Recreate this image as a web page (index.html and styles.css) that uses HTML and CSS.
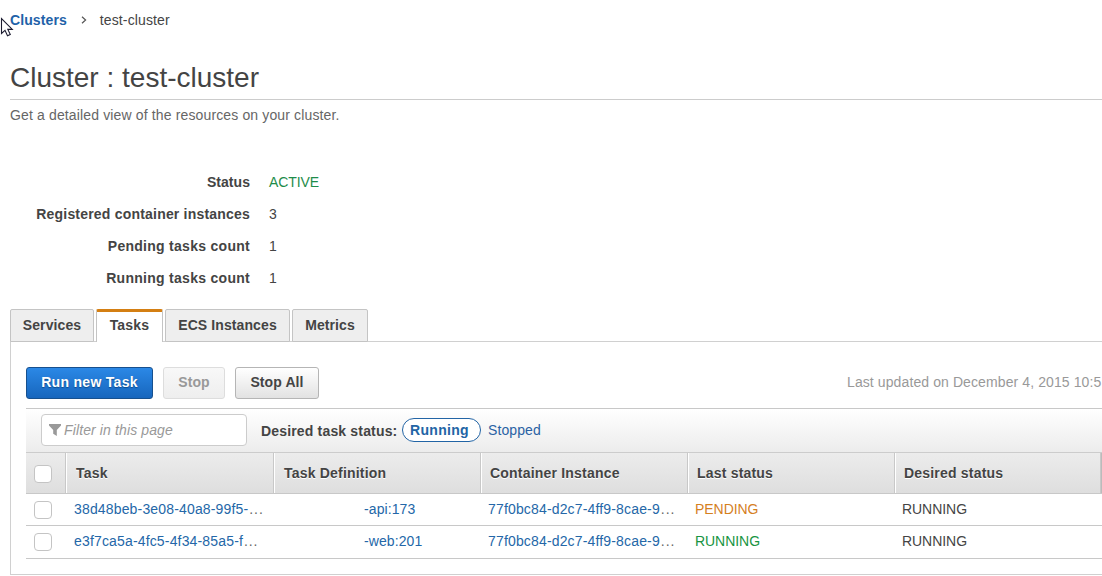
FILE: index.html
```html
<!DOCTYPE html>
<html lang="en">
<head>
<meta charset="utf-8">
<title>Cluster : test-cluster</title>
<link rel="stylesheet" href="styles.css">
</head>
<body>
<svg class="cursor" width="14" height="21" viewBox="0 0 14 21"><path d="M1.5 1.5V16.5L5 13.3L7.5 18.8L10.3 17.5L7.8 12.4H12.3Z" fill="#fff" stroke="#1c1c30" stroke-width="1.1"/></svg>
<main class="page">
  <nav class="crumbs"><a class="crumb-link" href="#">Clusters</a><svg class="chevron" width="6" height="8" viewBox="0 0 6 8"><path d="M1 .7L4.6 4L1 7.3" fill="none" stroke="#555" stroke-width="1.2"/></svg><span class="crumb-here">test-cluster</span></nav>
  <h1 class="title"><span class="title-text">Cluster : test-cluster</span></h1>
  <p class="description">Get a detailed view of the resources on your cluster.</p>
  <dl class="facts">
    <dt class="short">Status</dt><dd class="active">ACTIVE</dd>
    <dt>Registered container instances</dt><dd>3</dd>
    <dt class="wide">Pending tasks count</dt><dd>1</dd>
    <dt class="wide">Running tasks count</dt><dd>1</dd>
  </dl>
  <div class="tabs">
    <a class="tab services">Services</a><a class="tab selected">Tasks</a><a class="tab ecs">ECS Instances</a><a class="tab metrics">Metrics</a>
  </div>
  <section class="panel">
    <div class="actions">
      <button class="btn primary">Run new Task</button><button class="btn disabled">Stop</button><button class="btn all">Stop All</button>
      <span class="updated">Last updated on December 4, 2015 10:5</span>
    </div>
    <div class="filterbar">
      <div class="filter"><svg width="12" height="12" viewBox="0 0 12 12"><path d="M0 0H12V1.6L7.8 6V12L4.2 9.8V6L0 1.6Z" fill="#999"/></svg><span>Filter in this page</span></div>
      <span class="status-label">Desired task status:</span>
      <span class="pill">Running</span>
      <a class="stopped">Stopped</a>
    </div>
    <div class="row head">
      <div class="cell"><i class="check"></i></div><div class="cell">Task</div><div class="cell">Task Definition</div><div class="cell near">Container Instance</div><div class="cell near">Last status</div><div class="cell near">Desired status</div><div class="cell"></div>
    </div>
    <div class="row">
      <div class="cell"><i class="check"></i></div><div class="cell link">38d48beb-3e08-40a8-99f5-<span class="dots">...</span></div><div class="cell link definition">-api:173</div><div class="cell link instance">77f0bc84-d2c7-4ff9-8cae-9<span class="dots">...</span></div><div class="cell state pending">PENDING</div><div class="cell state">RUNNING</div>
    </div>
    <div class="row last">
      <div class="cell"><i class="check"></i></div><div class="cell link">e3f7ca5a-4fc5-4f34-85a5-f<span class="dots">...</span></div><div class="cell link definition">-web:201</div><div class="cell link instance">77f0bc84-d2c7-4ff9-8cae-9<span class="dots">...</span></div><div class="cell state running">RUNNING</div><div class="cell state">RUNNING</div>
    </div>
  </section>
</main>
</body>
</html>
```
FILE: styles.css
```css
* { box-sizing: border-box; }
body { margin: 0; background: #fff; color: #444; font: 14px/20px "Liberation Sans", Arial, sans-serif; }
.page { height: 576px; padding: 10px 0 0 10px; overflow: hidden; }
.cursor { position: absolute; left: 0; top: 17px; }
.crumbs { display: flex; align-items: center; height: 20px; }
.crumb-link { color: #1f62a8; font-weight: bold; letter-spacing: .1px; text-decoration: none; }
.crumb-here { letter-spacing: .12px; }
.chevron { margin: 0 13px 0 14px; }
.title { height: 70px; margin: 0; padding-top: 31px; border-bottom: 1px solid #ccc; font-size: 28px; font-weight: normal; line-height: 34px; }
.description { margin: 0; padding-top: 5px; color: #666; letter-spacing: .14px; }
.facts { display: grid; grid-template-columns: 240px 1fr; column-gap: 19px; grid-auto-rows: 32px; line-height: 32px; margin: 41px 0 15px; }
.facts dt { text-align: right; font-weight: bold; letter-spacing: .2px; }
.facts .short { letter-spacing: .05px; }
.facts .wide { letter-spacing: .28px; }
.facts dd { margin: 0; }
.facts .active { color: #1e8c4a; letter-spacing: -.1px; }
.tabs { position: relative; display: flex; gap: 2px; height: 33px; font-weight: bold; margin-bottom: -1px; }
.tab { height: 33px; border: 1px solid #c4c4c4; background: #eee; border-radius: 2px 2px 0 0; text-align: center; line-height: 31px; letter-spacing: .1px; }
.services { width: 84px; }
.selected { width: 67px; background: #fff; border-top: 3px solid #d47f13; border-bottom: 0; line-height: 27px; letter-spacing: .2px; }
.ecs { width: 125px; }
.metrics { width: 76px; }
.panel { height: 234px; border: 1px solid #d0d0d0; border-right: 0; padding: 25px 0 0 15px; }
.actions { display: flex; height: 41px; overflow: hidden; }
.btn { flex: none; height: 32px; margin: 0 10px 0 0; padding: 0 0 2px; border: 1px solid #b5b5b5; border-radius: 3px; background: linear-gradient(#fff, #e2e2e2); color: #444; font: bold 14px "Liberation Sans", Arial, sans-serif; letter-spacing: .1px; }
.primary { width: 127px; border-color: #17508e; background: linear-gradient(#2b88e6, #1766bd); color: #fff; text-shadow: 0 1px 1px #0d4a8d; letter-spacing: .3px; }
.disabled { width: 62px; border-color: #ddd; background: linear-gradient(#f8f8f8, #eee); color: #999; }
.all { width: 84px; }
.updated { margin: 5px 0 0 518px; color: #999; white-space: nowrap; letter-spacing: .1px; }
.filterbar { display: flex; height: 44px; padding: 5px 0 0 15px; border-top: 1px solid #c8c8c8; background: linear-gradient(#fff, #ececec); }
.filter { display: flex; gap: 3px; align-items: center; width: 206px; height: 32px; padding-left: 7px; margin-right: 14px; border: 1px solid #ccc; border-radius: 4px; background: #fff; color: #999; font-style: italic; letter-spacing: .12px; }
.status-label { width: 141px; font-weight: bold; line-height: 34px; white-space: nowrap; letter-spacing: .17px; }
.pill { width: 79px; height: 24px; margin: 4px 7px 0 0; border: 1px solid #2264a5; border-radius: 12px; background: #fff; color: #2264a5; font-weight: bold; text-align: center; line-height: 23px; letter-spacing: .3px; padding-right: 4px; }
.stopped { color: #2a62a4; line-height: 32px; letter-spacing: .1px; }
.row { display: grid; grid-template-columns: 40px 208px repeat(3, 207px) 206px 1px; height: 32px; border-bottom: 1px solid #c8c8c8; line-height: 31px; }
.last { height: 33px; }
.cell { padding-left: 8px; white-space: nowrap; overflow: hidden; letter-spacing: .1px; }
.head { height: 42px; border-top: 1px solid #ccc; background: linear-gradient(#ececec, #dedede); color: #444; font-weight: bold; line-height: 40px; text-shadow: 0 1px #fff; }
.head .cell { padding-left: 9px; border-left: 1px solid #fff; box-shadow: inset -1px 0 #c8c8c8; letter-spacing: .2px; }
.head .near { padding-left: 8px; }
.head .cell:first-child { border-left: 0; padding-left: 8px; }
.head .cell:last-child { border: 0; background: #bbb; }
.check { display: block; width: 18px; height: 18px; margin-top: 7px; border: 1px solid #c4c4c4; border-radius: 4px; background: #fff; }
.head .check { margin-top: 12px; }
.link { color: #2467a8; letter-spacing: .16px; }
.dots { margin-left: 1px; color: #666; letter-spacing: .9px; }
.definition { padding-left: 90px; letter-spacing: .1px; }
.instance { padding-left: 7px; }
.state { padding-left: 7px; letter-spacing: -.05px; }
.pending { color: #d5801f; }
.running { color: #189442; }
```
